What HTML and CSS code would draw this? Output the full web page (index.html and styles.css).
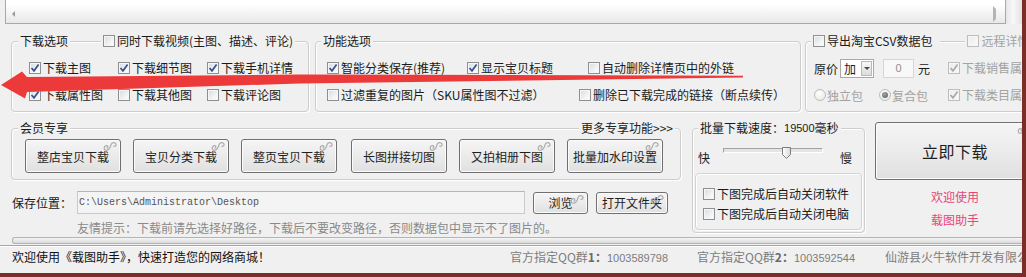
FILE: index.html
```html
<!DOCTYPE html>
<html lang="zh-CN">
<head>
<meta charset="utf-8">
<title>载图助手</title>
<link rel="stylesheet" href="styles.css">
</head>
<body>
<div class="win">
  <div class="top">
    <div class="hs"><span class="arr l"></span><span class="arr r"></span></div>
    <div class="vs"></div>
  </div>

  <div class="row1">
    <div class="gb g1">
      <div class="gh">
        <span class="gt">下载选项</span><span class="s31"></span>
        <span class="gt"><span class="cb"><i class="bx"></i>同时下载视频(主图、描述、评论)</span></span>
      </div>
      <div class="rows p17">
        <div class="r">
          <span class="cb c89"><i class="bx"><svg viewBox="0 0 10 10"><path d="M1.5 5 L4 7.8 L8.6 1.6"/></svg></i>下载主图</span>
          <span class="cb c89"><i class="bx"><svg viewBox="0 0 10 10"><path d="M1.5 5 L4 7.8 L8.6 1.6"/></svg></i>下载细节图</span>
          <span class="cb"><i class="bx"><svg viewBox="0 0 10 10"><path d="M1.5 5 L4 7.8 L8.6 1.6"/></svg></i>下载手机详情</span>
        </div>
        <div class="r">
          <span class="cb c89"><i class="bx"><svg viewBox="0 0 10 10"><path d="M1.5 5 L4 7.8 L8.6 1.6"/></svg></i>下载属性图</span>
          <span class="cb c89"><i class="bx"></i>下载其他图</span>
          <span class="cb"><i class="bx"></i>下载评论图</span>
        </div>
      </div>
    </div>

    <div class="gb g2">
      <div class="gh p5">
        <span class="gt">功能选项</span>
      </div>
      <div class="rows p11">
        <div class="r">
          <span class="cb c140"><i class="bx"><svg viewBox="0 0 10 10"><path d="M1.5 5 L4 7.8 L8.6 1.6"/></svg></i>智能分类保存(推荐)</span>
          <span class="cb c121"><i class="bx"><svg viewBox="0 0 10 10"><path d="M1.5 5 L4 7.8 L8.6 1.6"/></svg></i>显示宝贝标题</span>
          <span class="cb"><i class="bx"></i>自动删除详情页中的外链</span>
        </div>
        <div class="r">
          <span class="cb c252"><i class="bx"></i>过滤重复的图片（SKU属性图不过滤）</span>
          <span class="cb"><i class="bx"></i>删除已下载完成的链接（断点续传）</span>
        </div>
      </div>
    </div>

    <div class="gb g3">
      <div class="gh p5">
        <span class="gt pr8"><span class="cb"><i class="bx"></i>导出淘宝CSV数据包</span></span><span class="s25"></span>
        <span class="gt"><span class="cb dis"><i class="bx"></i>远程详情</span></span>
      </div>
      <div class="rows p8">
        <div class="r">
          <span>原价</span>
          <span class="sel"><span class="v">加</span><span class="dd"><i class="tri"></i></span></span>
          <span class="inp">0</span>
          <span class="yuan">元</span>
          <span class="cb dis ml18"><i class="bx"><svg viewBox="0 0 10 10"><path d="M1.5 5 L4 7.8 L8.6 1.6"/></svg></i>下载销售属性</span>
        </div>
        <div class="r">
          <span class="rd dis c65"><i class="rb"></i>独立包</span>
          <span class="rd dis c69"><i class="rb on"></i>复合包</span>
          <span class="cb dis"><i class="bx"><svg viewBox="0 0 10 10"><path d="M1.5 5 L4 7.8 L8.6 1.6"/></svg></i>下载类目属性</span>
        </div>
      </div>
    </div>
  </div>

  <div class="row2">
    <div class="lc">
      <div class="gb mg">
        <div class="gh mgh">
          <span class="gt">会员专享</span><span class="fill"></span><span class="gt more">更多专享功能&gt;&gt;&gt;</span>
        </div>
        <div class="btns">
          <div class="btn w96">整店宝贝下载<svg class="swirl" viewBox="0 0 16 11"><path d="M3.5 9.5 C0.5 9.5 0.5 4.5 3.8 4.6 C5.8 4.7 5.6 7.6 3.8 7.3 M3.5 9.5 C7 9.5 8 6 8.6 3.5 C9.2 1 12.8 0.6 13.8 2.8 C14.6 4.8 12.2 6.2 11.2 4.7"/></svg></div>
          <div class="btn w96">宝贝分类下载<svg class="swirl" viewBox="0 0 16 11"><path d="M3.5 9.5 C0.5 9.5 0.5 4.5 3.8 4.6 C5.8 4.7 5.6 7.6 3.8 7.3 M3.5 9.5 C7 9.5 8 6 8.6 3.5 C9.2 1 12.8 0.6 13.8 2.8 C14.6 4.8 12.2 6.2 11.2 4.7"/></svg></div>
          <div class="btn w96">整页宝贝下载<svg class="swirl" viewBox="0 0 16 11"><path d="M3.5 9.5 C0.5 9.5 0.5 4.5 3.8 4.6 C5.8 4.7 5.6 7.6 3.8 7.3 M3.5 9.5 C7 9.5 8 6 8.6 3.5 C9.2 1 12.8 0.6 13.8 2.8 C14.6 4.8 12.2 6.2 11.2 4.7"/></svg></div>
          <div class="btn w96 ml2">长图拼接切图<svg class="swirl" viewBox="0 0 16 11"><path d="M3.5 9.5 C0.5 9.5 0.5 4.5 3.8 4.6 C5.8 4.7 5.6 7.6 3.8 7.3 M3.5 9.5 C7 9.5 8 6 8.6 3.5 C9.2 1 12.8 0.6 13.8 2.8 C14.6 4.8 12.2 6.2 11.2 4.7"/></svg></div>
          <div class="btn w96">又拍相册下图<svg class="swirl" viewBox="0 0 16 11"><path d="M3.5 9.5 C0.5 9.5 0.5 4.5 3.8 4.6 C5.8 4.7 5.6 7.6 3.8 7.3 M3.5 9.5 C7 9.5 8 6 8.6 3.5 C9.2 1 12.8 0.6 13.8 2.8 C14.6 4.8 12.2 6.2 11.2 4.7"/></svg></div>
          <div class="btn w96">批量加水印设置<svg class="swirl" viewBox="0 0 16 11"><path d="M3.5 9.5 C0.5 9.5 0.5 4.5 3.8 4.6 C5.8 4.7 5.6 7.6 3.8 7.3 M3.5 9.5 C7 9.5 8 6 8.6 3.5 C9.2 1 12.8 0.6 13.8 2.8 C14.6 4.8 12.2 6.2 11.2 4.7"/></svg></div>
        </div>
      </div>
      <div class="save">
        <span class="lbl">保存位置：</span>
        <span class="path">C:\Users\Administrator\Desktop</span>
        <div class="btn sbtn w55">浏览<svg class="swirl" viewBox="0 0 16 11"><path d="M3.5 9.5 C0.5 9.5 0.5 4.5 3.8 4.6 C5.8 4.7 5.6 7.6 3.8 7.3 M3.5 9.5 C7 9.5 8 6 8.6 3.5 C9.2 1 12.8 0.6 13.8 2.8 C14.6 4.8 12.2 6.2 11.2 4.7"/></svg></div>
        <div class="btn sbtn w72">打开文件夹<svg class="swirl" viewBox="0 0 16 11"><path d="M3.5 9.5 C0.5 9.5 0.5 4.5 3.8 4.6 C5.8 4.7 5.6 7.6 3.8 7.3 M3.5 9.5 C7 9.5 8 6 8.6 3.5 C9.2 1 12.8 0.6 13.8 2.8 C14.6 4.8 12.2 6.2 11.2 4.7"/></svg></div>
      </div>
      <div class="hint">友情提示：下载前请先选择好路径，下载后不要改变路径，否则数据包中显示不了图片的。</div>
    </div>

    <div class="gb sg">
      <div class="gh p5">
        <span class="gt">批量下载速度：<span class="num">19500</span>毫秒</span>
      </div>
      <div class="slrow">
        <span>快</span>
        <span class="track"><svg class="thumb" viewBox="0 0 9 12"><defs><linearGradient id="tg" x1="0" y1="0" x2="1" y2="0"><stop offset="0" stop-color="#ffffff"/><stop offset="1" stop-color="#d9d9d9"/></linearGradient></defs><polygon points="0.5,0.5 8.5,0.5 8.5,7.5 4.5,11.5 0.5,7.5" fill="url(#tg)" stroke="#7c7c7c"/></svg></span>
        <span class="slow">慢</span>
      </div>
      <div class="inner">
        <span class="cb"><i class="bx"></i>下图完成后自动关闭软件</span>
        <span class="cb"><i class="bx"></i>下图完成后自动关闭电脑</span>
      </div>
    </div>

    <div class="rc">
      <div class="btn big">立即下载<svg class="swirl" viewBox="0 0 16 11"><path d="M3.5 9.5 C0.5 9.5 0.5 4.5 3.8 4.6 C5.8 4.7 5.6 7.6 3.8 7.3 M3.5 9.5 C7 9.5 8 6 8.6 3.5 C9.2 1 12.8 0.6 13.8 2.8 C14.6 4.8 12.2 6.2 11.2 4.7"/></svg></div>
      <div class="pink p1">欢迎使用</div>
      <div class="pink p2">载图助手</div>
    </div>
  </div>

  <div class="prog"></div>

  <div class="status">
    <span class="st1">欢迎使用《载图助手》，快速打造您的网络商城！</span>
    <span class="st2">官方指定QQ群<b>1：</b><span class="num">1003589798</span></span>
    <span class="st3">官方指定QQ群<b>2：</b><span class="num">1003592544</span></span>
    <span class="st4">仙游县火牛软件开发有限公司</span>
  </div>

  <svg class="arrow" width="1022" height="273" viewBox="0 0 1022 273">
    <polygon points="1,85 22,71.5 27,77 300,74.5 743,75.8 743,77.6 300,83.5 27,92 25,98.5" fill="#ec3a3a"/>
  </svg>
</div>
</body>
</html>
```

FILE: styles.css
```css
* { box-sizing: border-box; }

body {
  margin: 0;
  width: 1026px;
  height: 277px;
  overflow: hidden;
  background: #f0f0f0;
  font-family: "Noto Sans CJK SC", "Noto Sans", sans-serif;
  font-size: 12px;
  color: #1a1a1a;
}

.win {
  position: relative;
  width: 1026px;
  height: 277px;
  border-right: 4px solid #7b2e25;
  border-bottom: 4px solid #7b2e25;
  background: #f0f0f0;
  overflow: hidden;
}

/* top scroll strip */
.top { display: flex; height: 24px; }
.hs {
  margin-left: 5px;
  width: 1001px;
  height: 24px;
  border-left: 1px solid #a9a9a9;
  border-right: 1px solid #a9a9a9;
  border-bottom: 1px solid #a9a9a9;
  background: linear-gradient(#ffffff 0, #ffffff 5px, #fdfdfd 6px, #e8e8e8 23px);
  display: flex;
  justify-content: space-between;
  align-items: center;
  padding: 5px 9px 0 6px;
}
.arr { width: 0; height: 0; border-top: 3px solid transparent; border-bottom: 3px solid transparent; }
.arr.l { border-right: 3px solid #9a9a9a; }
.arr.r { border-left: 3px solid #b5b5b5; }
.vs {
  width: 16px;
  height: 24px;
  background: linear-gradient(to right, #e6e6e6, #f8f8f8 45%, #e2e2e2);
}

/* group boxes */
.gb {
  border: 1px solid #cdcdcd;
  border-radius: 4px;
  box-shadow: inset 1px 1px 0 #ffffff, 1px 1px 0 #ffffff;
  flex: none;
}
.gh {
  display: flex;
  align-items: center;
  height: 14px;
  margin-top: -8px;
  padding-left: 6px;
  line-height: 14px;
  white-space: nowrap;
}
.gh.p5 { padding-left: 5px; }
.gt {
  display: flex;
  align-items: center;
  height: 14px;
  padding: 0 2px;
  background: #f0f0f0;
}
.gt.pr8 { padding-right: 8px; }
.s31 { width: 31px; flex: none; }
.s25 { width: 25px; flex: none; }
.fill { flex: 1; }

.row1 { display: flex; margin-top: 17px; height: 71px; }
.g1 { margin-left: 11px; width: 298px; height: 71px; }
.g2 { margin-left: 6px; width: 486px; height: 71px; }
.g3 { margin-left: 4px; width: 240px; height: 71px; }

.rows { display: flex; flex-direction: column; gap: 11px; margin-top: 12px; }
.rows.p17 { padding-left: 17px; }
.rows.p11 { padding-left: 11px; }
.rows.p8 { padding-left: 8px; }
.r { display: flex; align-items: center; height: 16px; white-space: nowrap; }

.c89 { width: 89px; flex: none; }
.c140 { width: 140px; flex: none; }
.c121 { width: 121px; flex: none; }
.c252 { width: 252px; flex: none; }
.c65 { width: 65px; flex: none; }
.c69 { width: 69px; flex: none; }
.ml18 { margin-left: 18px; }

/* checkbox */
.cb { display: flex; align-items: center; white-space: nowrap; line-height: 16px; }
.bx {
  width: 12px;
  height: 12px;
  margin-right: 2px;
  flex: none;
  border: 1px solid #8e8f8f;
  background: linear-gradient(135deg, #d6dae2, #f3f4f7 65%, #ffffff);
  box-shadow: inset 0 0 0 1px #f6f6f6;
  display: flex;
  align-items: center;
  justify-content: center;
}
.bx svg { width: 10px; height: 10px; }
.bx svg path { fill: none; stroke: #35508e; stroke-width: 1.7; }
.dis { color: #a2a2a2; }
.dis .bx { border-color: #bdbdbd; background: linear-gradient(135deg, #ececec, #fafafa); }
.dis .bx svg path { stroke: #a9a9a9; }

/* radio */
.rd { display: flex; align-items: center; white-space: nowrap; }
.rb {
  width: 12px;
  height: 12px;
  margin-right: 1px;
  flex: none;
  border: 1px solid #bdbdbd;
  border-radius: 50%;
  background: radial-gradient(circle at 40% 35%, #ffffff, #e3e3e3);
  display: flex;
  align-items: center;
  justify-content: center;
}
.rb.on::after {
  content: "";
  width: 6px;
  height: 6px;
  border-radius: 50%;
  background: radial-gradient(circle at 40% 35%, #a5a5a5, #555555);
}

/* select & input */
.sel {
  display: flex;
  width: 34px;
  height: 19px;
  margin-left: 2px;
  border: 1px solid #a9a9a9;
  background: #ffffff;
}
.sel .v { flex: 1; padding-left: 3px; line-height: 17px; }
.sel .dd {
  width: 11px;
  margin: 1px;
  border: 1px solid #b9b9b9;
  background: linear-gradient(#f8f8f8, #dcdcdc);
  display: flex;
  align-items: center;
  justify-content: center;
}
.tri {
  width: 0; height: 0;
  border-left: 3px solid transparent;
  border-right: 3px solid transparent;
  border-top: 3px solid #4a4a4a;
}
.inp {
  width: 31px;
  height: 19px;
  margin-left: 9px;
  border: 1px solid #d6d6d6;
  background: #f8f8f8;
  color: #8d8d8d;
  text-align: center;
  line-height: 17px;
  font-family: "Liberation Sans", sans-serif;
  font-size: 11px;
}
.yuan { margin-left: 4px; }

/* second row */
.row2 { display: flex; align-items: flex-start; margin-top: 16px; height: 109px; }
.lc { margin-left: 11px; width: 670px; flex: none; }
.mg { height: 52px; }
.mgh { padding-right: 5px; }
.more { color: #222; }
.btns { display: flex; gap: 12px; margin-top: 4px; padding-left: 13px; }

.btn {
  position: relative;
  height: 34px;
  border: 1px solid #707070;
  border-radius: 3px;
  background: linear-gradient(#f5f5f5, #ebebeb 50%, #e0e0e0);
  box-shadow: inset 0 0 0 1px #fbfbfb;
  display: flex;
  align-items: center;
  justify-content: center;
  color: #1e1e1e;
  white-space: nowrap;
  flex: none;
}
.w96 { width: 96px; }
.ml2 { margin-left: 2px; }
.swirl { position: absolute; top: 1px; right: 2px; width: 15px; height: 11px; }
.swirl path { fill: none; stroke: #acacac; stroke-width: 1.3; }

.save { display: flex; align-items: center; margin-top: 11px; height: 23px; }
.lbl { width: 66px; padding-left: 1px; flex: none; }
.path {
  width: 448px;
  height: 23px;
  flex: none;
  border: 1px solid #cacaca;
  border-top-color: #b6b6b6;
  background: #f4f4f4;
  font-family: "Liberation Mono", monospace;
  font-size: 10px;
  color: #555555;
  display: flex;
  align-items: center;
  padding-left: 1px;
}
.sbtn { height: 22px; margin-left: 8px; }
.w55 { width: 55px; }
.w72 { width: 72px; }
.hint { margin-top: 6px; padding-left: 66px; color: #8a8a8a; line-height: 16px; height: 16px; white-space: nowrap; }

/* speed */
.sg { margin-left: 11px; width: 173px; height: 105px; }
.num { font-family: "Liberation Sans", sans-serif; font-size: 11px; }
.slrow { display: flex; align-items: center; height: 16px; margin-top: 14px; padding-left: 5px; }
.track {
  position: relative;
  width: 100px;
  height: 5px;
  margin-left: 13px;
  align-self: flex-start;
  margin-top: -1px;
  border: 1px solid;
  border-color: #a3a3a3 #ffffff #ffffff #a3a3a3;
  background: #e4e4e4;
  flex: none;
}
.thumb { position: absolute; left: 58px; top: -2px; width: 9px; height: 12px; }
.slow { margin-left: 17px; }
.inner {
  margin: 8px 2px 0;
  height: 57px;
  border: 1px solid #d3d3d3;
  border-radius: 4px;
  box-shadow: inset 1px 1px 0 #ffffff, 1px 1px 0 #ffffff;
  padding: 12px 0 0 7px;
  display: flex;
  flex-direction: column;
  gap: 4px;
}

/* right column */
.rc { margin-left: 10px; width: 160px; flex: none; margin-top: -6px; display: flex; flex-direction: column; align-items: center; }
.big { width: 160px; height: 58px; font-size: 16px; letter-spacing: 0.5px; }
.pink { color: #e8457c; line-height: 16px; }
.pink.p1 { margin-top: 9px; }
.pink.p2 { margin-top: 7px; }

/* progress + status */
.prog {
  margin-left: 12px;
  height: 7px;
  border: 1px solid #b4b4b4;
  border-right: none;
  border-radius: 3px 0 0 3px;
  background: linear-gradient(#f6f6f6, #d9d9d9);
}
.status {
  margin-top: 1px;
  height: 28px;
  border-top: 1px solid #a6a6a6;
  box-shadow: inset 0 1px 0 #ffffff;
  display: flex;
  padding-top: 3px;
  line-height: 16px;
  white-space: nowrap;
}
.st1 { width: 510px; padding-left: 12px; color: #111111; flex: none; }
.st2 { width: 187px; color: #7d7d7d; flex: none; }
.st3 { width: 188px; color: #7d7d7d; flex: none; }
.st4 { color: #7d7d7d; }
.status b { color: #6a6a6a; }

.arrow { position: absolute; left: 0; top: 0; pointer-events: none; }
```
